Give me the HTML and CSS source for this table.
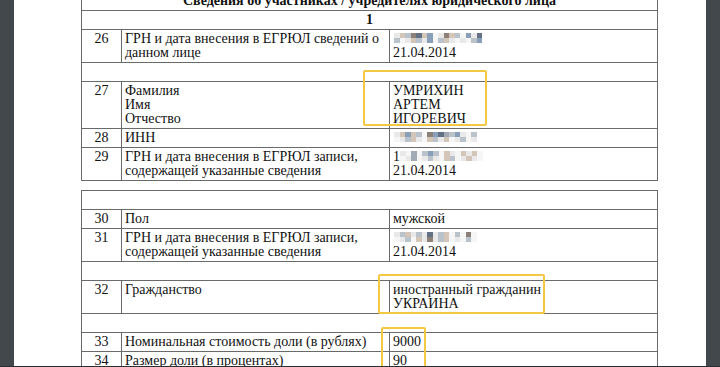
FILE: index.html
```html
<!DOCTYPE html>
<html lang="ru">
<head>
<meta charset="utf-8">
<title>Сведения об участниках</title>
<link rel="stylesheet" href="styles.css">
</head>
<body>
<div class="viewer">
  <div class="side"></div>
  <div class="page">
    <div class="sheet">
      <table class="t">
        <colgroup><col class="c1"><col class="c2"><col class="c3"></colgroup>
        <tr><td colspan="3" class="head">Сведения об участниках / учредителях юридического лица</td></tr>
        <tr><td colspan="3" class="head">1</td></tr>
        <tr><td class="num">26</td><td>ГРН и дата внесения в ЕГРЮЛ сведений о данном лице</td><td><span class="mz w16"><i class="a"></i><i class="b"></i><i class="c"></i><i class="d"></i><i class="e"></i><i class="b"></i><i class="f"></i><i class="g"></i><i class="a"></i><i class="d"></i><i class="b"></i><i class="c"></i><i class="g"></i><i class="f"></i><i class="a"></i><i class="e"></i><i class="c"></i><i class="g"></i><i class="a"></i><i class="b"></i><i class="c"></i><i class="a"></i><i class="f"></i><i class="g"></i><i class="c"></i><i class="b"></i><i class="a"></i><i class="g"></i><i class="a"></i><i class="g"></i><i class="c"></i><i class="f"></i></span><br>21.04.2014</td></tr>
        <tr><td colspan="3">&nbsp;</td></tr>
        <tr><td class="num">27</td><td>Фамилия<br>Имя<br>Отчество</td><td>УМРИХИН<br>АРТЕМ<br>ИГОРЕВИЧ</td></tr>
        <tr><td class="num">28</td><td>ИНН</td><td><span class="mz w15"><i class="a"></i><i class="b"></i><i class="f"></i><i class="b"></i><i class="c"></i><i class="g"></i><i class="d"></i><i class="f"></i><i class="e"></i><i class="h"></i><i class="c"></i><i class="f"></i><i class="a"></i><i class="g"></i><i class="c"></i><i class="g"></i><i class="a"></i><i class="c"></i><i class="b"></i><i class="a"></i><i class="g"></i><i class="b"></i><i class="c"></i><i class="a"></i><i class="b"></i><i class="g"></i><i class="a"></i><i class="c"></i><i class="g"></i><i class="a"></i></span></td></tr>
        <tr><td class="num">29</td><td>ГРН и дата внесения в ЕГРЮЛ записи, содержащей указанные сведения</td><td>1<span class="mz w15 tight"><i class="a"></i><i class="g"></i><i class="h"></i><i class="g"></i><i class="c"></i><i class="f"></i><i class="c"></i><i class="g"></i><i class="b"></i><i class="a"></i><i class="g"></i><i class="b"></i><i class="a"></i><i class="b"></i><i class="g"></i><i class="g"></i><i class="a"></i><i class="h"></i><i class="g"></i><i class="a"></i><i class="c"></i><i class="a"></i><i class="g"></i><i class="b"></i><i class="c"></i><i class="g"></i><i class="a"></i><i class="b"></i><i class="a"></i><i class="g"></i></span><br>21.04.2014</td></tr>
      </table>
      <table class="t t2">
        <colgroup><col class="c1"><col class="c2"><col class="c3"></colgroup>
        <tr><td colspan="3">&nbsp;</td></tr>
        <tr><td class="num">30</td><td>Пол</td><td>мужской</td></tr>
        <tr><td class="num">31</td><td>ГРН и дата внесения в ЕГРЮЛ записи, содержащей указанные сведения</td><td><span class="mz w15"><i class="a"></i><i class="c"></i><i class="b"></i><i class="a"></i><i class="c"></i><i class="a"></i><i class="e"></i><i class="a"></i><i class="c"></i><i class="b"></i><i class="g"></i><i class="c"></i><i class="g"></i><i class="d"></i><i class="g"></i><i class="g"></i><i class="a"></i><i class="c"></i><i class="g"></i><i class="b"></i><i class="a"></i><i class="d"></i><i class="a"></i><i class="c"></i><i class="b"></i><i class="g"></i><i class="a"></i><i class="g"></i><i class="c"></i><i class="g"></i></span><br>21.04.2014</td></tr>
        <tr><td colspan="3">&nbsp;</td></tr>
        <tr><td class="num">32</td><td>Гражданство</td><td>иностранный гражданин<br>УКРАИНА</td></tr>
        <tr><td colspan="3">&nbsp;</td></tr>
        <tr><td class="num">33</td><td>Номинальная стоимость доли (в рублях)</td><td>9000</td></tr>
        <tr><td class="num">34</td><td>Размер доли (в процентах)</td><td>90</td></tr>
      </table>
    </div>
    <div class="mark m-name"></div>
    <div class="mark m-cit"></div>
    <div class="mark m-sum"></div>
  </div>
  <div class="side"></div>
</div>
</body>
</html>
```
FILE: styles.css
```css
html, body {
  margin: 0;
  padding: 0;
  background: #2f3337;
}
.viewer {
  display: flex;
  width: 720px;
  height: 366px;
  overflow: hidden;
  border-bottom: 1px solid #2b2e31;
}
.side {
  width: 14px;
  flex: none;
  background: #43484c;
}
.page {
  position: relative;
  flex: 1;
  background: #fff;
  overflow: hidden;
}
.sheet {
  margin: -9px 0 0 67px;
}
.t {
  border-collapse: collapse;
  table-layout: fixed;
  width: 576px;
  font-family: "Liberation Serif", "Times New Roman", serif;
  font-size: 14px;
  line-height: 14px;
  color: #111;
}
.t2 {
  margin-top: 9px;
}
.c1 { width: 40px; }
.c2 { width: 268px; }
.c3 { width: 268px; }
.t td {
  border: 1px solid #6a6a6a;
  padding: 2px 3px 2px;
  vertical-align: top;
  line-height: 14px;
}
.t .num {
  text-align: center;
}
.t .head {
  text-align: center;
  font-weight: bold;
}
.mz {
  display: inline-grid;
  grid-auto-rows: 5px;
  vertical-align: top;
  margin: 1px 0 0 1px;
  opacity: 0.8;
}
.w16 { grid-template-columns: repeat(16, 5.5px); }
.w15 { grid-template-columns: repeat(15, 5.5px); }
.tight { margin-left: 0; }
.mz i { display: block; }
.mz .a { background: #e4e4e6; }
.mz .b { background: #c9b9a8; }
.mz .c { background: #a9b3c0; }
.mz .d { background: #6f6258; }
.mz .e { background: #3e4d66; }
.mz .f { background: #6c86a6; }
.mz .g { background: #f4f4f4; }
.mz .h { background: #8c96a3; }
.mark {
  position: absolute;
  border: 2.5px solid #f5c844;
  border-radius: 2px;
  box-sizing: border-box;
}
.m-name { left: 349px; top: 70px; width: 124px; height: 56px; }
.m-cit { left: 364px; top: 274px; width: 167px; height: 40px; }
.m-sum { left: 367px; top: 327px; width: 45px; height: 60px; }
```
